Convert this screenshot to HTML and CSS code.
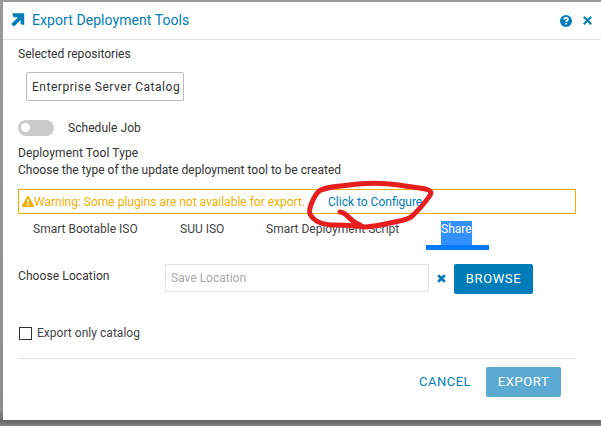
FILE: index.html
```html
<!DOCTYPE html>
<html lang="en">
<head>
<meta charset="utf-8">
<title>Export Deployment Tools</title>
<link rel="stylesheet" href="styles.css">
</head>
<body>
<main class="dialog">
  <header class="header">
    <svg class="arrow" width="14" height="14" viewBox="0 0 14 14"><path d="M1.3 .2H13.2V12L9.6 11.2V6.9L3 13.6L.3 10.9L7 4.3H2.6Z"/></svg>
    <h1 class="title">Export Deployment Tools</h1>
    <svg class="help" width="12" height="12" viewBox="0 0 12 12"><circle cx="6" cy="6" r="6"/><path class="mark" d="M4 4.4C4.1 2.2 8 2.3 8 4.3C8 5.6 6.1 5.5 6.1 7.1M6.1 8.1V9.6"/></svg>
    <svg class="close" width="9" height="9" viewBox="0 0 9 9"><path d="M.8.8L8.2 8.2M8.2.8L.8 8.2"/></svg>
  </header>
  <section class="body">
    <p class="label repos">Selected repositories</p>
    <div class="chip"><span class="t-chip">Enterprise Server Catalog</span></div>
    <div class="schedule"><span class="toggle"></span><span class="t-job">Schedule Job</span></div>
    <p class="label type">Deployment Tool Type</p>
    <p class="label choose">Choose the type of the update deployment tool to be created</p>
    <div class="warning">
      <svg width="12" height="11" viewBox="0 0 12 11"><path class="tri" d="M6 0Q6.7 0 7 .6L11.8 9.4Q12.3 11 11 11H1Q-.3 11 .2 9.4L5 .6Q5.3 0 6 0Z"/><path class="bang" d="M6 3.3V6.8M6 7.8V9.5"/></svg>
      <span class="t-warn">Warning: Some plugins are not available for export.</span>
      <a class="configure">Click to Configure</a>
      <svg class="marker" width="130" height="60" viewBox="305 175 130 60"><path d="M399 185C385 183 370 183 357 184C340 186 325 187 319 191C314 196 308 209 310 214C314 222 323 225 335 225C346 225 354 226 366 227C378 226 382 225 390 223C399 221 407 220 411 217C418 211 430 197 431 193C431 188 416 188 399 185M340 212C347 212 350 222 360 225"/></svg>
    </div>
    <nav class="tabs">
      <span class="tab bootable">Smart Bootable ISO</span>
      <span class="tab suu">SUU ISO</span>
      <span class="tab script">Smart Deployment Script</span>
      <span class="tab share"><span class="selected">Share</span></span>
    </nav>
    <div class="location">
      <span class="t-loc">Choose Location</span>
      <div class="input"><span>Save Location</span></div>
      <svg class="clear" width="9" height="9" viewBox="0 0 9 9"><path d="M1.2 1.2L7.8 7.8M7.8 1.2L1.2 7.8"/></svg>
      <button class="button browse">BROWSE</button>
    </div>
    <div class="catalog"><span class="checkbox"></span><span>Export only catalog</span></div>
    <footer class="footer">
      <span class="cancel">CANCEL</span>
      <button class="button export">EXPORT</button>
    </footer>
  </section>
</main>
</body>
</html>
```
FILE: styles.css
```css
* { box-sizing: border-box; margin: 0; }
body { width: 601px; height: 426px; overflow: hidden; padding: 2px 0 0 3px; background: linear-gradient(#999 0, #8e8e8e 410px, #666 421px, #858585 426px); font: 12px/16px Roboto, sans-serif; color: #333; }
.dialog { width: 598px; height: 418px; background: #fff; }
.header { display: flex; align-items: center; height: 38px; border-bottom: 1px solid #e0e0e0; padding: 0 9px 0 8px; color: #007db8; }
.arrow { fill: #007db8; margin-top: -2px; }
.title { flex: 1; margin: -2px 0 0 7px; font-size: 14px; font-weight: 400; letter-spacing: .07px; white-space: nowrap; }
.help { fill: #007db8; }
.mark { fill: none; stroke: #fff; stroke-width: 1.7; }
.close { margin-left: 11px; }
.close path, .clear path { fill: none; stroke: #007db8; stroke-width: 2; }
.body { padding: 6px 25px 0 15px; white-space: nowrap; }
.label { height: 16px; letter-spacing: .02px; }
.chip { display: flex; align-items: center; width: 158px; height: 29px; margin: 10px 0 0 8px; padding-left: 5px; border: 1px solid #bbb; border-radius: 2px; letter-spacing: .52px; }
.schedule { display: flex; align-items: center; height: 16px; margin-top: 19px; letter-spacing: .05px; }
.toggle { width: 36px; height: 16px; margin-right: 14px; padding: 3px; border-radius: 8px; background: #ccc; }
.toggle::before { content: ""; display: block; width: 9px; height: 9px; border-radius: 50%; background: #fff; }
.type { margin-top: 9px; letter-spacing: .12px; }
.choose { margin-top: 1px; }
.warning { position: relative; display: flex; align-items: center; width: 558px; height: 25px; margin-top: 11px; padding-left: 3px; border: 1px solid #f2af00; color: #f2af00; }
.tri { fill: #f2af00; }
.bang { fill: none; stroke: #fff; stroke-width: 1.6; }
.t-warn { width: 294px; }
.configure { color: #007db8; }
.marker { position: absolute; left: 286px; top: -15px; z-index: 2; overflow: visible; }
.marker path { fill: none; stroke: #e61e1e; stroke-width: 5; stroke-linecap: round; stroke-linejoin: round; }
.tabs { display: flex; height: 36px; padding: 7px 0 0 15px; color: #444; }
.bootable { width: 147px; }
.suu { width: 86px; }
.script { width: 160px; }
.share { width: 63px; height: 29px; padding-left: 15px; border-bottom: 5px solid #007bff; }
.selected { display: block; width: 31px; height: 24px; background: #3390ff; color: #fff; }
.location { display: flex; height: 30px; margin-top: 14px; }
.t-loc { width: 147px; padding-top: 4px; letter-spacing: .1px; }
.input { width: 264px; height: 28px; border: 1px solid #e4e4e4; padding: 5px; color: #aaa; }
.clear { margin: 10px 8px 0; }
.clear path { stroke-width: 2.7; }
.button { height: 30px; padding: 0; border: 0; border-radius: 2px; background: #007db8; color: #fff; font: 13px/30px Roboto, sans-serif; letter-spacing: .6px; }
.browse { width: 79px; }
.catalog { display: flex; align-items: center; height: 16px; margin-top: 31px; padding-left: 1px; color: #444; letter-spacing: .03px; }
.checkbox { width: 13px; height: 13px; margin-right: 5px; border: 1px solid #333; }
.footer { display: flex; justify-content: flex-end; width: 558px; margin-top: 17px; padding: 8px 15px 0 0; border-top: 1px solid #e0e0e0; }
.cancel { width: 67px; color: #007db8; font-size: 13px; line-height: 30px; letter-spacing: .5px; }
.export { width: 75px; background: #5aaad2; }
```
